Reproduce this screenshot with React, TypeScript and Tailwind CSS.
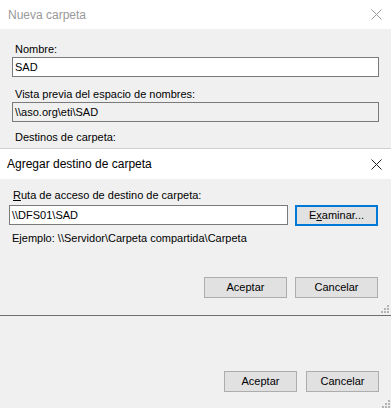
import React from "react";

function Grip() {
  return (
    <svg width="8" height="8" viewBox="0 0 8 8" className="block">
      <rect x="6" y="0" width="2" height="2" fill="#b4b4b4" />
      <rect x="3" y="3" width="2" height="2" fill="#b4b4b4" />
      <rect x="6" y="3" width="2" height="2" fill="#b4b4b4" />
      <rect x="0" y="6" width="2" height="2" fill="#b4b4b4" />
      <rect x="3" y="6" width="2" height="2" fill="#b4b4b4" />
      <rect x="6" y="6" width="2" height="2" fill="#b4b4b4" />
    </svg>
  );
}

function CloseX({ color }: { color: string }) {
  return (
    <svg width="11" height="11" viewBox="0 0 11 11" className="block">
      <path d="M0.5 0.5 L10.5 10.5 M10.5 0.5 L0.5 10.5" stroke={color} strokeWidth="1" />
    </svg>
  );
}

function WinButton({ children, w }: { children: React.ReactNode; w: string }) {
  return (
    <div
      className={`${w} h-[21px] border border-[#adadad] bg-[#e1e1e1] flex items-center justify-center text-[11px] text-black`}
    >
      {children}
    </div>
  );
}

export default function App() {
  return (
    <div
      className="relative w-[391px] h-[408px] overflow-hidden bg-[#f0f0f0] text-black"
      style={{ fontFamily: '"Liberation Sans", Arial, sans-serif' }}
    >
      {/* Nueva carpeta (behind) */}
      <div className="h-[29px] bg-white flex items-center justify-between pl-[8px] pr-[9px]">
        <span className="text-[12px] text-[#999999]">Nueva carpeta</span>
        <CloseX color="#9a9a9a" />
      </div>
      <div className="px-[12px] pt-[14px]">
        <div className="pl-[3px] text-[11px] leading-[13px]">Nombre:</div>
        <div className="mt-[1px] h-[20px] border border-[#7a7a7a] bg-white flex items-center pl-[2px] text-[11px]">
          SAD
        </div>
        <div className="mt-[11px] pl-[3px] text-[11px] leading-[13px]">
          Vista previa del espacio de nombres:
        </div>
        <div className="mt-[1px] h-[20px] border border-[#7a7a7a] bg-[#f0f0f0] flex items-center pl-[2px] text-[11px]">
          \\aso.org\eti\SAD
        </div>
        <div className="mt-[9px] pl-[3px] text-[11px] leading-[13px]">Destinos de carpeta:</div>
        <div className="mt-[4px] h-[120px] border border-[#7a7a7a] bg-[#f0f0f0]" />
      </div>
      <div className="absolute left-[224px] top-[371px] flex gap-[9px]">
        <WinButton w="w-[73px]">Aceptar</WinButton>
        <WinButton w="w-[73px]">Cancelar</WinButton>
      </div>
      <div className="absolute right-[1px] bottom-[0px]">
        <Grip />
      </div>

      {/* Agregar destino de carpeta (on top) */}
      <div className="absolute left-0 top-[148px] w-[391px] h-[168px] bg-[#f0f0f0] border-t border-[#cfcfcf] border-b border-b-[#6e6e6e]">
        <div className="h-[30px] bg-white flex items-center justify-between pl-[7px] pr-[9px]">
          <span className="text-[12px]">Agregar destino de carpeta</span>
          <CloseX color="#222222" />
        </div>
        <div className="px-[9px] pt-[10px]">
          <div className="pl-[4px] text-[11px] leading-[13px]">
            <u>R</u>uta de acceso de destino de carpeta:
          </div>
          <div className="mt-[3px] flex gap-[7px]">
            <div className="w-[279px] h-[20px] border border-[#7a7a7a] bg-white flex items-center pl-[2px] text-[11px]">
              \\DFS01\SAD
            </div>
            <div className="w-[83px] h-[21px] border-2 border-[#0078d7] bg-[#e1e1e1] flex items-center justify-center text-[11px]">
              E<u>x</u>aminar...
            </div>
          </div>
          <div className="mt-[6px] pl-[3px] text-[11px] leading-[13px]">
            Ejemplo: \\Servidor\Carpeta compartida\Carpeta
          </div>
        </div>
        <div className="absolute left-[204px] top-[128px] flex gap-[8px]">
          <WinButton w="w-[83px]">Aceptar</WinButton>
          <WinButton w="w-[83px]">Cancelar</WinButton>
        </div>
        <div className="absolute right-[2px] bottom-[2px]">
          <Grip />
        </div>
      </div>
    </div>
  );
}
